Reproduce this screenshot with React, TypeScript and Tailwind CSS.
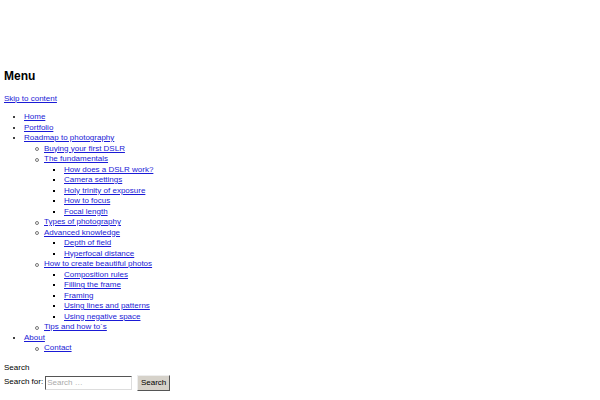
const link = "text-[#1a1ad6] underline";

type Item = { label: string; children?: Item[] };

const menu: Item[] = [
  { label: "Home" },
  { label: "Portfolio" },
  {
    label: "Roadmap to photography",
    children: [
      { label: "Buying your first DSLR" },
      {
        label: "The fundamentals",
        children: [
          { label: "How does a DSLR work?" },
          { label: "Camera settings" },
          { label: "Holy trinity of exposure" },
          { label: "How to focus" },
          { label: "Focal length" },
        ],
      },
      { label: "Types of photography" },
      {
        label: "Advanced knowledge",
        children: [{ label: "Depth of field" }, { label: "Hyperfocal distance" }],
      },
      {
        label: "How to create beautiful photos",
        children: [
          { label: "Composition rules" },
          { label: "Filling the frame" },
          { label: "Framing" },
          { label: "Using lines and patterns" },
          { label: "Using negative space" },
        ],
      },
      { label: "Tips and how to´s" },
    ],
  },
  { label: "About", children: [{ label: "Contact" }] },
];

function MenuList({ items, depth }: { items: Item[]; depth: number }) {
  const bullet =
    depth === 0 ? "[list-style-type:disc]" : depth === 1 ? "list-none" : "[list-style-type:square]";
  return (
    <ul className={`${bullet} pl-[20px]`}>
      {items.map((item) => (
        <li key={item.label} className="relative">
          {depth === 1 && (
            <span className="absolute left-[-9px] top-[3.5px] h-[4px] w-[4px] rounded-full border border-[#777]" />
          )}
          <a href="#" className={link}>
            {item.label}
          </a>
          {item.children && <MenuList items={item.children} depth={depth + 1} />}
        </li>
      ))}
    </ul>
  );
}

export default function App() {
  return (
    <div className="min-h-[400px] bg-white pl-[4px] text-[8px] leading-[10.5px] text-black font-['Liberation_Sans',Arial,sans-serif]">
      <h2 className="pt-[69px] text-[12px] leading-[14px] font-semibold">Menu</h2>

      <div className="mt-[11px]">
        <a href="#" className={link}>
          Skip to content
        </a>
      </div>

      <nav className="mt-[7.5px]">
        <MenuList items={menu} depth={0} />
      </nav>

      <div className="mt-[9px]">Search</div>
      <form className="mt-[1.5px] flex items-center">
        <label className="mr-[2px]">Search for:</label>
        <input
          type="text"
          placeholder="Search …"
          className="h-[14px] w-[87px] border border-t-[#555] border-l-[#555] border-b-[#ddd] border-r-[#ddd] bg-white px-[1px] text-[8px] placeholder:text-[#aaa] outline-none"
        />
        <button
          type="button"
          className="ml-[5px] h-[16px] w-[33px] border border-t-[#eee] border-l-[#eee] border-b-[#555] border-r-[#555] bg-[#d6d2ca] text-[8px] leading-none"
        >
          Search
        </button>
      </form>
    </div>
  );
}
